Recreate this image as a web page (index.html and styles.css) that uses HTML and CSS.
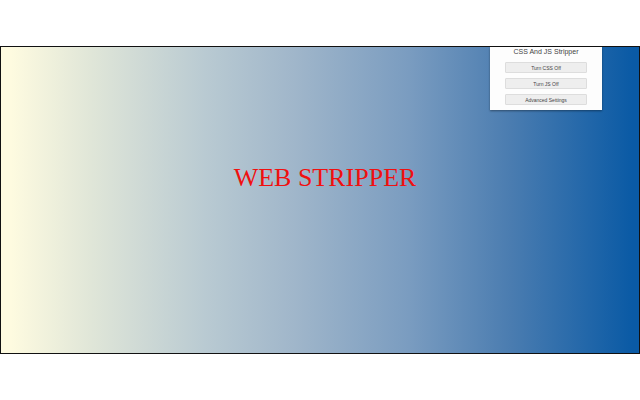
FILE: index.html

```html
<!DOCTYPE html>
<html lang="en">
<head>
    <meta charset="UTF-8">
    <title>Web Stripper</title>
    <link rel="stylesheet" href="styles.css">
</head>
<body class="body">
    <div class="stage">
        <h1 class="headline">WEB STRIPPER</h1>
        <div class="popup">
            <div class="popup-title">CSS And JS Stripper</div>
            <button class="popup-btn">Turn CSS Off</button>
            <button class="popup-btn">Turn JS Off</button>
            <button class="popup-btn">Advanced Settings</button>
        </div>
    </div>
</body>
</html>
```

FILE: styles.css

```css
.body {
    margin: 0;
    padding-top: 46px;
    background-color: #fff;
}

.stage {
    position: relative;
    display: flex;
    align-items: center;
    justify-content: center;
    box-sizing: border-box;
    height: 308px;
    padding-bottom: 45px;
    padding-left: 10px;
    border: 1px solid #111;
    background: linear-gradient(to right, #fefbe0 1.5%, #e0e6d8 14%, #b9cad2 32%, #a0b6ca 46%, #7a9cc0 64%, #4a7cb0 80%, #0a5aa5 99%);
}

.headline {
    margin: 0;
    font-family: "Liberation Serif", serif;
    font-size: 26px;
    font-weight: normal;
    color: #f01010;
}

.popup {
    position: absolute;
    top: 0;
    right: 37px;
    display: flex;
    flex-direction: column;
    align-items: center;
    gap: 5px;
    box-sizing: border-box;
    width: 112px;
    height: 63px;
    background-color: #fdfdfd;
    box-shadow: 0 1px 2px rgba(0, 0, 0, 0.4);
}

.popup-title {
    height: 10px;
    font-family: "Liberation Sans", sans-serif;
    font-size: 7px;
    line-height: 9px;
    color: #444;
}

.popup-btn {
    width: 82px;
    height: 11px;
    padding: 0;
    border: 1px solid #ddd;
    border-radius: 1px;
    background-color: #eee;
    font-family: "Liberation Sans", sans-serif;
    font-size: 5px;
    color: #444;
}
```
